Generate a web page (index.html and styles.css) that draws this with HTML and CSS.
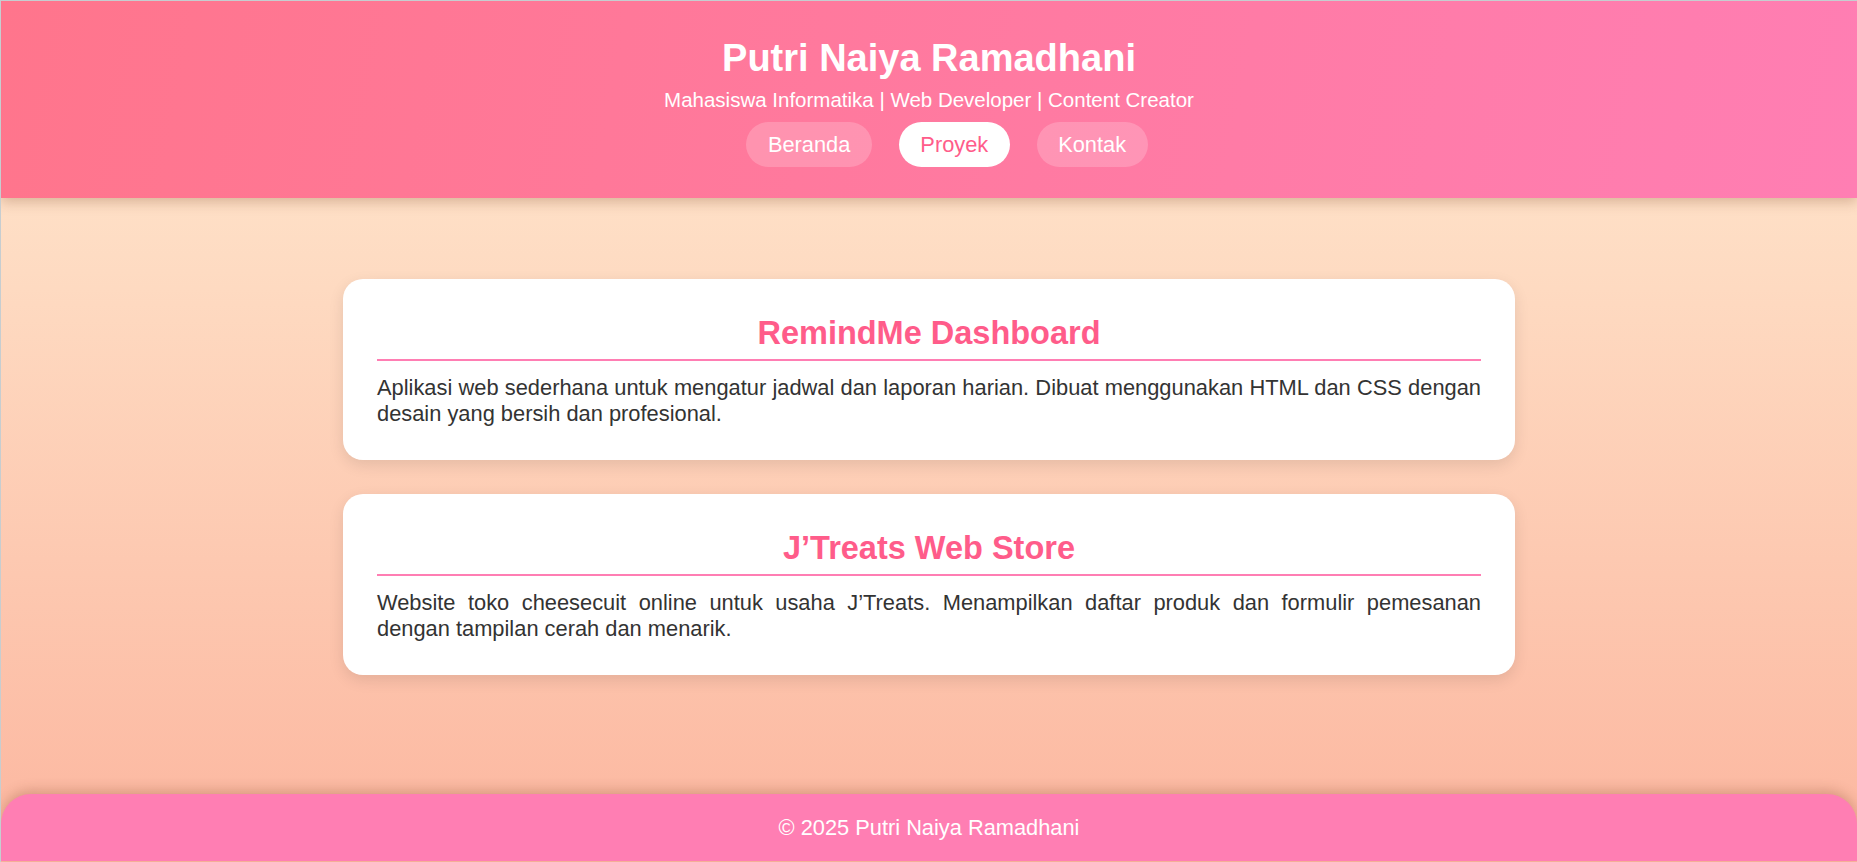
FILE: index.html
```html
<!DOCTYPE html>
<html lang="id">
<head>
<meta charset="utf-8">
<title>Proyek - Putri Naiya Ramadhani</title>
<link rel="stylesheet" href="styles.css">
</head>
<body>
  <header class="site-header">
    <h1 class="site-title">Putri Naiya Ramadhani</h1>
    <p class="site-tagline">Mahasiswa Informatika | Web Developer | Content Creator</p>
    <nav class="site-nav">
      <a class="nav-link" href="#">Beranda</a>
      <a class="nav-link active" href="#">Proyek</a>
      <a class="nav-link" href="#">Kontak</a>
    </nav>
  </header>

  <main class="content">
    <section class="card">
      <h2 class="card-title">RemindMe Dashboard</h2>
      <p class="card-text">Aplikasi web sederhana untuk mengatur jadwal dan laporan harian. Dibuat menggunakan HTML dan CSS dengan desain yang bersih dan profesional.</p>
    </section>
    <section class="card">
      <h2 class="card-title">J’Treats Web Store</h2>
      <p class="card-text">Website toko cheesecuit online untuk usaha J’Treats. Menampilkan daftar produk dan formulir pemesanan dengan tampilan cerah dan menarik.</p>
    </section>
  </main>

  <footer class="site-footer">
    <p class="footer-text">© 2025 Putri Naiya Ramadhani</p>
  </footer>
</body>
</html>
```

FILE: styles.css
```css
* {
  box-sizing: border-box;
}

html {
  height: 100%;
}

body {
  margin: 0;
  min-height: 100vh;
  display: flex;
  flex-direction: column;
  border-top: 1px solid #c6cdd0;
  border-left: 1px solid #c6cdd0;
  padding-bottom: 1px;
  font-family: Arial, "Liberation Sans", sans-serif;
  background: linear-gradient(to bottom, #ffecd2 0%, #fcb69f 100%);
  color: #333;
}

.site-header {
  background: linear-gradient(100deg, #ff758c 0%, #ff7eb3 100%);
  color: #fff;
  text-align: center;
  padding: 35px 20px 31px;
  box-shadow: 0 4px 12px rgba(120, 60, 30, 0.28);
  position: relative;
  z-index: 1;
}

.site-title {
  margin: 0;
  font-size: 38px;
  font-weight: bold;
  line-height: 44px;
}

.site-tagline {
  margin: 8px 0 0;
  font-size: 20.5px;
  line-height: 24px;
}

.site-nav {
  margin-top: 10px;
  padding-left: 36px;
  display: flex;
  justify-content: center;
  gap: 27px;
}

.nav-link {
  display: inline-block;
  padding: 10px 21.5px;
  border-radius: 24px;
  font-size: 21.8px;
  line-height: 25px;
  color: #fff;
  text-decoration: none;
  background: rgba(255, 255, 255, 0.2);
}

.nav-link.active {
  background: #fff;
  color: #ff5c8a;
}

.content {
  flex: 1;
  padding: 81px 0 60px;
  display: flex;
  flex-direction: column;
  align-items: center;
  gap: 34px;
}

.card {
  width: 1172px;
  background: #fff;
  border-radius: 20px;
  padding: 36px 34px 33px;
  box-shadow: 0 5px 15px rgba(0, 0, 0, 0.1);
}

.card-title {
  margin: 0 0 14px;
  padding-bottom: 7px;
  border-bottom: 2px solid #ff7eb3;
  text-align: center;
  color: #ff5c8a;
  font-size: 32.5px;
  line-height: 37px;
  font-weight: bold;
}

.card-text {
  margin: 0;
  font-size: 21.85px;
  line-height: 26px;
  text-align: justify;
  color: #333;
}

.site-footer {
  background: #ff7eb3;
  color: #fff;
  text-align: center;
  border-radius: 30px 30px 0 0;
  height: 67px;
  display: flex;
  align-items: center;
  justify-content: center;
  box-shadow: 0 -4px 12px rgba(120, 60, 30, 0.25);
}

.footer-text {
  margin: 0;
  font-size: 21.8px;
  line-height: 25px;
}
```
